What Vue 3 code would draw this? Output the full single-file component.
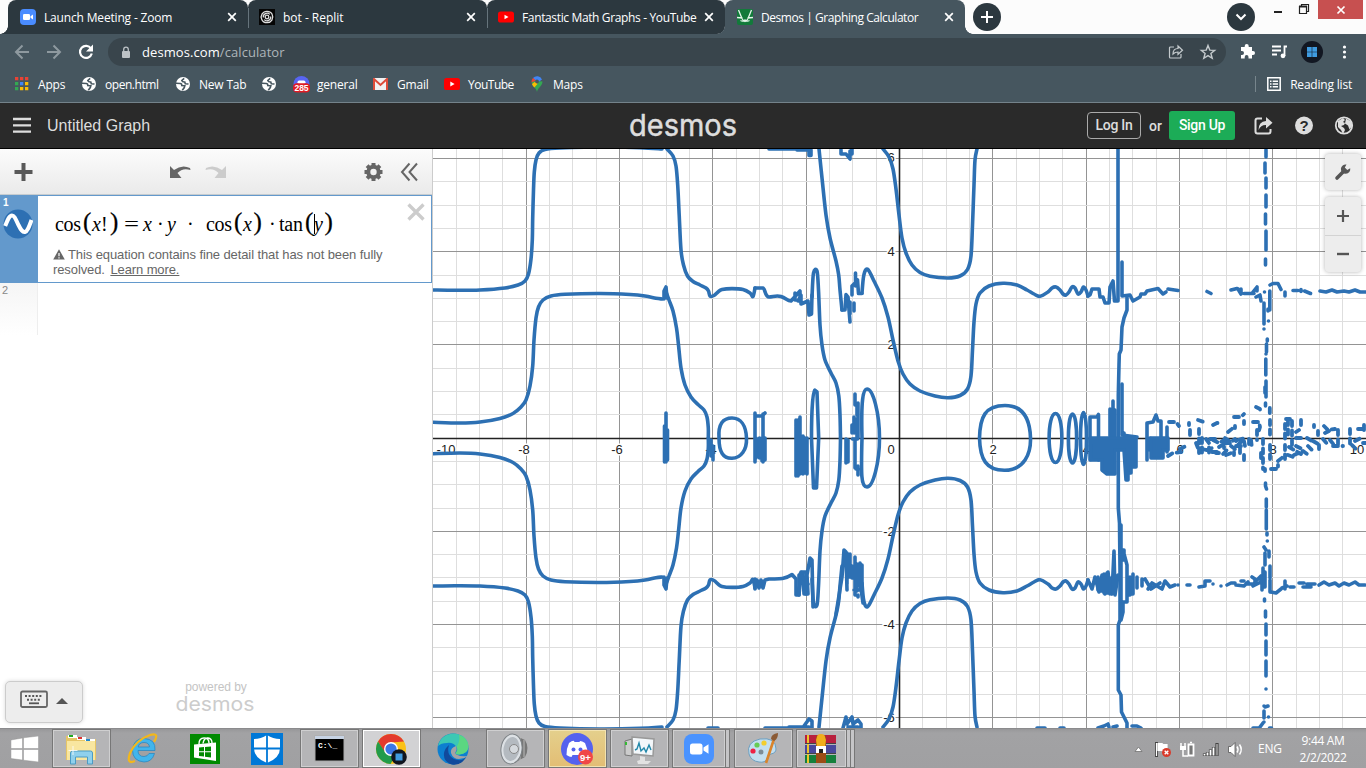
<script setup>
const tabs = [
  { title: 'Launch Meeting - Zoom', icon: 'zoom', w: 240, ls: -0.17 },
  { title: 'bot - Replit', icon: 'replit', w: 239, ls: -0.02 },
  { title: 'Fantastic Math Graphs - YouTube', icon: 'youtube', w: 238, ls: -0.36 },
  { title: 'Desmos | Graphing Calculator', icon: 'desmos', w: 240, active: true, ls: -0.44 }
]
const verticals = Array.from({ length: 41 }, (_, i) => ({ p: Math.round(432.2 + i * 23.34) + 0.5, major: i % 4 === 0 }))
const horizontals = Array.from({ length: 25 }, (_, i) => ({ p: Math.round(158 + i * 23.3) + 0.5, major: i % 4 === 0 }))
const labels = [
  ['-10', 446, 454], ['-8', 524, 454], ['-6', 617, 454], ['-4', 711, 454], ['0', 891, 454], ['2', 993, 454],
  ['4', 1086, 454], ['6', 1180, 454], ['8', 1273, 454], ['10', 1357, 454],
  ['6', 891, 162], ['4', 891, 256], ['2', 891, 349], ['-2', 889, 536], ['-4', 889, 629], ['-6', 889, 722]
]

function smooth(p) {
  let d = `M${p[0]} ${p[1]}`
  const n = p.length / 2
  const at = (i) => { const k = Math.max(0, Math.min(n - 1, i)); return [p[2 * k], p[2 * k + 1]] }
  for (let i = 0; i < n - 1; i++) {
    const [a, b, c, e] = [at(i - 1), at(i), at(i + 1), at(i + 2)]
    d += `C${b[0] + (c[0] - a[0]) / 6} ${b[1] + (c[1] - a[1]) / 6} ${c[0] - (e[0] - b[0]) / 6} ${c[1] - (e[1] - b[1]) / 6} ${c[0]} ${c[1]}`
  }
  return d
}

const mirrored = [
  [433, 290, 455, 290.3, 480, 290, 505, 288, 518, 285, 525, 281, 528.5, 274, 531, 259, 532.3, 240, 532.7, 218, 533.5, 190, 534.3, 172, 536, 160, 539, 153, 545, 149.5, 560, 148, 600, 147, 640, 147.6, 662, 149],
  [667, 149, 673, 156, 676, 166, 677.7, 185, 679.2, 215, 681, 250, 683.5, 265, 687.5, 276, 693, 281.5, 700, 285, 706, 288, 708.5, 291, 710, 296, 714, 295.5, 718, 292, 722, 289.5, 732, 288.6, 743, 289.5, 750, 293, 753, 296.5, 755, 288],
  [433, 422.3, 460, 423, 480, 422, 500, 418.5, 513, 413.5, 521, 407, 526, 400, 530, 386, 532.7, 366, 534, 340, 536, 318, 538.5, 307, 543, 300, 551, 296, 565, 294.3, 600, 293.5, 630, 294.5, 645, 296, 656, 298.3, 662, 299],
  [666, 292, 669, 300, 673, 311, 676.5, 328, 678.5, 345, 681, 368, 685, 385, 691, 397, 698, 404.5, 704, 410, 707, 417, 708.3, 428, 708.3, 438],
  [812, 297, 813.5, 273, 817, 271, 818.5, 290, 820, 325, 822, 345, 825, 360, 831, 373, 836, 383, 838.8, 396, 840, 415, 840.5, 438],
  [819, 149, 822, 178, 826, 215, 830, 238, 836, 261, 838.7, 275, 840, 290, 842, 310],
  [862, 293, 863.5, 277, 866, 269.5, 869, 271, 874, 281, 882, 298, 888, 317, 893, 340, 898, 361, 903, 374, 910, 384, 920, 391, 935, 396, 948, 397.7, 960, 395.5, 967.5, 389, 971, 376, 972.5, 350, 974, 322, 976, 304, 980, 293, 989, 286, 1003, 283.3, 1017, 285, 1027, 290, 1034, 294, 1040, 296.3, 1048, 292, 1052, 288, 1056, 287, 1060, 290, 1063, 294, 1066, 295, 1069, 292, 1072, 287, 1075, 288, 1078, 294, 1081, 292, 1083.5, 287, 1086, 290, 1088, 296],
  [883, 149, 889, 157, 893, 169, 896, 189, 899, 215, 902, 238, 906, 253, 912, 265, 920, 272.5, 930, 276.3, 948, 278, 960, 276, 967.5, 269.5, 971, 256, 972.5, 225, 974, 185, 975, 160, 977, 149]
].map(smooth)

const rings = [
  'M719 438C718 424 723 418 732 418S746 426 746.5 438 741 458 732 458.3 719 452 719 438Z',
  'M979.5 438C980 417 985 405.5 1005 405.5S1030 422 1030.5 438 1024 470 1005 470.3 980 459 979.5 438Z',
  'M862 438C861 400 863 389 867 389 873 389 879.5 413 879.5 438S873 487 867 487 861 475 862 438Z',
  'M811.5 438C811.5 410 813 390 814.5 390L817 392 818.7 438 816.5 488H813.5Z'
]

const jagged = [
  'M664 299V291L666 287 667 298', 'M666 413V462M664.5 426V462M667.5 430V460', 'M711 440V456M713 446v14M709 440v9',
  'M755 288h8C765 288 765 297 769 297S776 295 781 296.500 787 301 791 301L800 291V301H798L801 295V304L808 301 809 315 811.5 314 812 295M795 300V293',
  'M755 413V462M757 416h5L765 413M763 414V462M756 438V458M759.5 438V458M762 438V461M765 438V460M758 440V450',
  'M796 420V476M798 420V476M800 417V474M796 426l4-3M803 436V474M805 438V473M807 438V474',
  'M842 310L845 310 846 294.5 848 297 850 322M852 295V286L855 283 857.5 280 858.5 293.5H862M855.5 273V286M854 303v8M850 302v12',
  'M846 439V463M848 440V462', 'M852 425v8M852.5 439h5M854 417v16l3-14v20M855 394v11M858 403V438M855 440V468M858 466V475M856 469h3M857 407v8',
  'M755 579V589M757 580L759 588 761 580 763 588 765 580 769 579C778 579 784 580 792 574.5L796 579V595L799 595 801 572 803 574 804 594H808L807 575 810 558 812 560 813 607',
  'M806 574V594M802 572h5M799 575V595M800 574L808 584',
  'M836 614L842 577 844 550 846 552 847 590M847 553V584M850 554V577M852 566V578M855 557V595M857 564V591M854 590h5M858 595v2M860 563V582L863 603M862 565V590M853 575h9',
  'M769 149h30M797 150h13M809 150V155.500H811V150M841 150V154L846 154 850 159V151M852 149V154',
  'M708 728h10M765 728h25M789 727h20M804 726L809 719 812 721V728M843 728L846 717 847 724 852 717 853 724 858 720 861 724V728M848 727h10',
  'M1088 296L1090 295 1092 289 1099 289 1100 297 1103 297 1105 303H1109L1110 287 1113 281 1114.5 301 1118 301V149',
  'M1122 262V296L1130 295 1133 301 1140 297 1141 294H1145L1147 291 1158 288.5 1163 294 1166 292',
  'M1127 296V310L1124 318 1122 327 1121 350 1119.3 354 1119 365 1118.3 395V508L1119.5 523 1120 570V620L1118.3 625V690L1121 695 1121.5 712 1127 723V728',
  'M1055.5 413.5C1047 413.5 1047 462.5 1055.5 462.5S1064 413.5 1055.5 413.5M1072.5 414C1067 414 1067 463 1072.5 463S1078 414 1072.5 414M1083.5 412.5C1079.5 412.5 1079.5 464.5 1083.5 464.5S1087.5 412.5 1083.5 412.5',
  'M1090 460V417H1097L1098.5 414.5V460M1110 436V409M1113 436V401M1115 436V410M1122 384V435L1137 437M1124 433V450',
  'M1147 460V423L1153 422 1156 415 1158 421H1161V457M1167 427V452M1150 438V450',
  'M1088 580L1092 589 1095 577 1099 592 1102 575 1105 594 1108 572 1110 590 1112 594 1114 551 1115 595 1118 575',
  'M1098 577V590M1101 579V591M1104 574V593M1107 573V593M1110 578V594M1121 525V610M1123 550L1127 565V602H1123V612L1121 620M1124 560V550M1127 589V596M1130 577V595M1133 574V594M1137 577V588M1142 579V586M1145 579L1151 589 1160 583M1148 589L1152 583 1162 589 1165 581 1170 587 1175 585'
]
const fillBlocks = [
  'M1090 438H1136V467H1131V473H1128V480H1126L1124 450H1115V474H1107L1102 470V460H1091Z',
  'M1151 438H1168V450H1163V458H1151Z'
]
const sparks = [
  'M1168 289L1178 290.5M1207 291.5l4 2M1231 290l6-1.5M1238 289l3 5v-5M1244 293.5h10M1253 292l4-5v4M1256 297l4-2 1 6M1264.5 292v0M1269.8 291v19M1264 303v21M1268 309v2M1264 329v0M1268.5 321v0M1270 285l3-1.5h5l3 6M1285 292v4M1293 290.5h5M1301 289.5v2M1304.5 291l6 2.5M1320 291l6 1 6-2 5 2 7-1 5 1 6-2 5 2h6',
  'M1266 150v7M1265 163v10M1266 178v10M1266 195v12M1265.5 214v10M1266 231v19M1265.5 259v6M1267.3 339v2M1266.5 344v8M1266 354v0M1265.8 359v16M1266 381v16M1265.5 403v3M1265 387v6M1265.5 483v3l1 3M1266.3 499v8M1266.3 510v19M1267 533v2M1267.3 541v0M1264 547l2 3M1265 553v12M1263 568v10M1262 581v9M1265 572v15M1269 551v6M1270 566v12M1270 580v12M1264.5 599v2M1265.5 611v6M1266 624v11M1266 641v14M1266 661v15M1266 689v0M1264 706v0M1265 707l3-1M1264 711v7M1268.5 717v0M1260 727l3-4M1253 728h5M1269.5 728h2M1264 722v0',
  'M1037 728h8M1060 728h4M1098 728l6-2 4-2 1 3M1113 727l4-1M1132 726h5l4 2',
  'M1178 585h0M1187 585h3M1199 587l6-1v-5h5M1213 584h0M1221 586h0M1227 585l4-2h4M1236 585l8 1 4-4M1241 581h3M1247 584h6M1252 577l3 2v6M1257 580l4-4v7M1253 586l8-4M1271 592l5 1 5-4M1282 588l5-2M1285 581v8M1290 587h4M1299 583h5M1303 587h8M1307 584h8M1319 585l5-3 5 3 6-2 4 3 5-3 5 2 6-3 4 3h6'
]
const dotted = [
  'M1169 422h7l3 4M1189 423v2M1190 430v8M1183 438v0M1198 420l6 2M1213 425l4-2h3M1234 417h7l3-3M1199 429v24M1202 438v15M1206 439l3 4v10M1213 440l6 3 5-3v8M1225 438l6 4 4-3 3 6 6-6M1228 432l5-4M1235 426v2M1244 421v3M1249 439v6M1240 448v5M1244 455v6M1234 452v3M1251 440l1 8M1223 454l4-4M1216 453h3M1196 443l3 8M1168 456l5-3 8-1M1180 449l8-4M1256 407l4 2v3M1253 422h6l1 5-2 7M1257 430v10M1263 439v30M1269.8 408v7M1270 420v15M1270 445v14M1261 453v8M1265 469v2',
  'M1207 450l8-3M1219 447l10-6M1226 455l8-3M1231 446l5 4M1244 441l1 5M1210 439h9M1212 452h5M1238 440l7-2M1236 446h8M1202 449l9 2M1225 443h5',
  'M1271 469h7v-4M1278 461l5-4M1283 464v0M1285 424v17M1286 419h4M1288 420v18M1292 421v25M1285 445v14M1288 455l5 2M1294 455l9-4 4 3M1296 446l6 3M1301 420v7M1299 430l-3 2M1314 425v2M1318 431v4M1313 441l7 4M1324 426l4 4 7-1M1325 433l4-2M1323 439l5 6M1330 440l4 5M1338 430v19M1333 446h10M1342 447v0M1350 429v18M1355 441l6-3M1358 429h4M1364 425v8M1363 443h3M1308 446l4 4M1319 445v4M1296 438h6M1307 438l5 3M1289 447l12 7M1352 445l5 5'
]

const tasks = ['explorer', 'ie', 'store', 'defender', 'cmd', 'chrome', 'edge', 'speaker', 'discord', 'monitor', 'zoom', 'paint', 'rar']
const open = ['explorer', 'cmd', 'chrome', 'speaker', 'discord', 'monitor', 'zoom', 'paint', 'rar']
</script>

<template>
  <div class="screen">
    <div class="tabstrip">
      <div class="tabs">
        <div v-for="(t, i) in tabs" :key="t.title" class="tab" :class="{ active: t.active, last: i === 2 }" :style="{ width: t.w + 'px' }">
          <svg class="fav" viewBox="0 0 16 16">
            <g v-if="t.icon === 'zoom'"><rect width="16" height="16" rx="4" fill="#4a8cff" /><rect x="3" y="5" width="7" height="6" rx="1.3" fill="#fff" /><path d="M10.5 7.3L13 5.4v5.2l-2.5-1.9z" fill="#fff" /></g>
            <g v-else-if="t.icon === 'replit'"><rect width="16" height="16" fill="#050505" /><g fill="none" stroke="#ddd" stroke-width="1.3"><circle cx="8" cy="8" r="1.8" /><path d="M2.800 10.500A5.700 5.700 0 0 1 8 2.300q4 0 5.200 3.200M13.200 5.500A5.700 5.700 0 0 1 8 13.700q-4 0-5.200-3.200M4.300 8.500A3.800 3.800 0 0 1 10.800 5.400M11.700 7.500A3.800 3.800 0 0 1 5.200 10.600" /></g></g>
            <g v-else-if="t.icon === 'youtube'"><rect y="2.500" width="16" height="11" rx="2.600" fill="#f00" /><path d="M6.500 5.700v4.600L10.500 8z" fill="#fff" /></g>
            <g v-else><rect width="16" height="16" rx="2" fill="#127a3a" /><path d="M1.500 1L5 9.500Q6.500 12.500 8 12.500T11 9.500L14.500 1M0 8.500l5.500.5M16 8.500l-5.500.5M3.500 11.500q2.500 1.500 4.500-.5 2 2 4.500.5" fill="none" stroke="#e4f5ea" stroke-width="1.300" /></g>
          </svg>
          <span class="tt" :style="{ letterSpacing: t.ls + 'px' }">{{ t.title }}</span>
          <svg class="x" viewBox="0 0 10 10"><path d="M1.200 1.200l7.600 7.600M8.800 1.200L1.200 8.800" stroke="#fff" stroke-width="1.700" /></svg>
        </div>
      </div>
      <svg class="round plus" viewBox="0 0 28 28"><circle cx="14" cy="14" r="14" fill="#2c383f" /><path d="M14 8v12M8 14h12" stroke="#fff" stroke-width="2" /></svg>
      <svg class="round down" viewBox="0 0 28 28"><circle cx="14" cy="14" r="14" fill="#2c383f" /><path d="M9.500 11.500L14 16l4.500-4.500" fill="none" stroke="#fff" stroke-width="2" /></svg>
      <svg class="caps" viewBox="0 0 48 19"><path d="M5 12h8" stroke="#222" stroke-width="2" /><path d="M30.500 6.500h7v7h-7zM32.500 6V4.500h7v7H38" fill="none" stroke="#222" stroke-width="1.200" /><path d="M30 6.500h8" stroke="#222" stroke-width="2" /></svg>
      <div class="closewin"><svg viewBox="0 0 10 10"><path d="M1.500 1.500l7 7M8.500 1.500l-7 7" stroke="#fff" stroke-width="1.700" /></svg></div>
    </div>

    <div class="navbar">
      <svg class="navicons" viewBox="0 0 108 36"><g fill="none" stroke="#8e999f" stroke-width="2"><path d="M29 18H16M22.500 11.500L16 18l6.500 6.500M47 18h13M53.500 11.500L60 18l-6.500 6.500" /></g><path d="M91 14.500A6 6 0 1 0 91.800 19.500" fill="none" stroke="#fff" stroke-width="2.200" /><path d="M93 10.500v7h-7z" fill="#fff" /></svg>
      <div class="omni">
        <svg class="lock" viewBox="0 0 10 13"><rect x="1" y="5" width="8" height="7" rx="1" fill="#bcc2c6" /><path d="M2.700 6V3.500a2.300 2.300 0 0 1 4.600 0V6" fill="none" stroke="#bcc2c6" stroke-width="1.300" /></svg>
        <span class="url">desmos.com<i>/calculator</i></span>
        <svg class="omr" viewBox="0 0 50 20"><g fill="none" stroke="#c4cacd" stroke-width="1.200"><path d="M6 5H2.500q-1 0-1 1v9q0 1 1 1h9.500q1 0 1-1v-3" /><path d="M5 12q0-5.500 5-5.500V4l4.500 4.300L10 12.300V10q-3 0-5 2z" /><path d="M40 3.500l1.800 4.600 4.900.3-3.800 3.100 1.300 4.800-4.200-2.700-4.200 2.700 1.300-4.800-3.800-3.100 4.900-.3z" stroke-width="1.400" /></g></svg>
      </div>
      <svg class="navright" viewBox="0 0 140 36"><path d="M15 13h3.700v-1a2 2 0 0 1 4 0v1H26v4h1a2 2 0 0 1 0 4h-1v3.500h-3.500V23a1.900 1.900 0 0 0-3.800 0v1.500H15V21h1a2 2 0 0 0 0-4h-1z" fill="#fff" /><path d="M46 12.500h9M46 16.500h9M46 20.500h5M58.500 22V12.500H61" fill="none" stroke="#fff" stroke-width="1.800" /><circle cx="57" cy="21.800" r="2.400" fill="#fff" /><circle cx="86" cy="18" r="11" fill="#121722" /><path d="M81 13h4.700v4.700H81zM86.300 13H91v4.700h-4.700zM81 18.300h4.700V23H81zM86.300 18.300H91V23h-4.700z" fill="#3f9be0" /><g fill="#fff"><circle cx="118.500" cy="13" r="1.600" /><circle cx="118.500" cy="18" r="1.600" /><circle cx="118.500" cy="23" r="1.600" /></g></svg>
    </div>

    <div class="bookmarks">
      <svg class="b16" viewBox="0 0 14 14"><path d="M0 0h3.300v3.300H0zM5 0h3.300v3.300H5zM10 0h3.300v3.300H10z" fill="#ea4335" /><path d="M0 5h3.300v3.300H0zM0 10h3.300v3.300H0z" fill="#34a853" /><path d="M5 5h3.300v3.300H5z" fill="#4285f4" /><path d="M5 10h3.300v3.300H5zM10 5h3.300v3.300H10zM10 10h3.300v3.300H10z" fill="#fbbc05" /></svg>
      <span class="bm apps">Apps</span>
      <template v-for="(n, i) in ['open.html', 'New Tab', '']" :key="i">
        <svg class="globe" viewBox="0 0 14 14"><circle cx="7" cy="7" r="7" fill="#fff" /><path d="M0 6.300l4.300.2q1.800.3 1.500 2l3 .3-.5 1.800-2 2.600M8.200 1.300L5.800 3.500q.5 1.700 3 1.500l.5 1.700 3.200.3" fill="none" stroke="#46565f" stroke-width="1.600" /></svg>
        <span v-if="n" class="bm" :class="'g' + i">{{ n }}</span>
      </template>
      <svg class="disc" viewBox="0 0 17 17"><circle cx="8.500" cy="8" r="8" fill="#5865f2" /><rect x="4.500" y="4.500" width="8" height="3.500" rx="1.700" fill="#fff" /><rect y="7.300" width="17" height="9.200" rx="4" fill="#e01b24" /><text x="8.500" y="15" text-anchor="middle" font-family="Liberation Sans" font-weight="700" font-size="8.500" fill="#fff">285</text></svg>
      <span class="bm gen">general</span>
      <svg class="gm" viewBox="0 0 15 12"><rect width="15" height="12" rx="1" fill="#f1f1f1" /><path d="M1 12V1l6.500 6L14 1v11" fill="none" stroke="#dd4b39" stroke-width="2" /></svg>
      <span class="bm gml">Gmail</span>
      <svg class="yt" viewBox="0 0 16 12"><rect width="16" height="12" rx="2.600" fill="#f00" /><path d="M6.300 3.500v5l4.300-2.500z" fill="#fff" /></svg>
      <span class="bm ytl">YouTube</span>
      <svg class="mp" viewBox="0 0 12 16"><path d="M6 16C5.500 12 .5 10 .5 5.500L6 5l5.500.5C11.500 10 6.500 12 6 16z" fill="#34a853" /><path d="M2 2A5.500 5.500 0 0 1 11 3.500L6 7z" fill="#4285f4" /><path d="M.6 6.500A5 5 0 0 1 2 2l3 2.500z" fill="#ea4335" /><path d="M1 8l4-3 1.500 3L3.300 11.500Q1.500 9.500 1 8z" fill="#fbbc04" /><circle cx="6" cy="5.500" r="1.900" fill="#46565f" /></svg>
      <span class="bm">Maps</span>
      <div class="reading"><svg viewBox="0 0 14 14"><path d="M.8.8h12.400v12.400H.8zM3 4.200h1.500M3 7h1.500M3 9.800h1.500M5.700 4.200H11M5.700 7H11M5.700 9.800H11" fill="none" stroke="#fff" stroke-width="1.500" /></svg><span class="bm">Reading list</span></div>
    </div>

    <header class="head">
      <svg class="burger" viewBox="0 0 20 18"><path d="M1 2h18M1 8.300h18M1 14.700h18" stroke="#ddd" stroke-width="2.300" /></svg>
      <span class="gtitle">Untitled Graph</span>
      <svg class="logo" viewBox="0 0 116 44"><text x="3" y="32" textLength="108" lengthAdjust="spacingAndGlyphs" font-family="Inter" font-size="30" fill="#ddd" stroke="#ddd" stroke-width=".5" stroke-linejoin="round">desmos</text></svg>
      <div class="acct">
        <span class="login">Log In</span><span class="or">or</span><span class="signup">Sign Up</span>
        <svg class="hicons" viewBox="0 0 104 22"><path d="M9 3.500H4.500q-2 0-2 2v11q0 2 2 2h11q2 0 2-2V14" fill="none" stroke="#ddd" stroke-width="2" /><path d="M5.500 15Q5.500 6.500 13 6V2l6.500 5.800L13 13.500V10q-5-.3-7.500 5z" fill="#ddd" /><circle cx="51" cy="10.500" r="9" fill="#ddd" /><text x="51" y="15.800" text-anchor="middle" font-family="Liberation Sans" font-weight="700" font-size="15" fill="#2a2a2a">?</text><circle cx="91" cy="10.500" r="8.200" fill="none" stroke="#ddd" stroke-width="1.800" /><path d="M85 6l5-3 2 2-2 2 2 1-1 2-3 1 3 2 1 2-2 4-2-4-3-3zM93 3.500l5 3 1.500 4-3 4-1.500-4-3-2z" fill="#ddd" /></svg>
      </div>
    </header>

    <main class="body">
      <aside class="panel">
        <div class="ptool">
          <svg viewBox="0 0 433 46"><path d="M23.500 14v18M14.500 23h18" stroke="#595959" stroke-width="4" /><path d="M170 29V17l4 4q8-6 16-2l.5 2q-8-2.500-13 3l4 5z" fill="#666" /><path d="M226 29V17l-4 4q-8-6-16-2l-.5 2q8-2.500 13 3l-4 5z" fill="#ccc" /><g transform="translate(373.500 23)"><circle r="5.200" fill="none" stroke="#666" stroke-width="4" /><path d="M0-9v3M0 6v3M-9 0h3M6 0h3M-6.400-6.400l2.200 2.200M4.200 4.200l2.200 2.200M6.400-6.400L4.200-4.200M-4.200 4.200l-2.200 2.200" stroke="#666" stroke-width="4" /></g><path d="M409.500 14.500l-7.500 8.500 7.500 8.500M417 14.500L409.500 23l7.500 8.500" fill="none" stroke="#666" stroke-width="2" /></svg>
        </div>
        <div class="expr">
          <div class="etab"><b>1</b><svg viewBox="0 0 30 30"><circle cx="15" cy="15" r="14.500" fill="#2d70b3" /><path d="M2.200 17C5 10 6.500 6.500 9 6.500S13 11 15.500 16 19.500 23.500 22 23 26 18 28.500 11" fill="none" stroke="#fff" stroke-width="4" /></svg></div>
          <div class="ebody">
            <svg class="formula" viewBox="0 0 340 40" font-family="Liberation Serif" font-size="20">
              <text x="17" y="34.500" textLength="26">cos</text><text x="54" y="34.500" font-style="italic">x</text><text x="63" y="34.500">!</text>
              <text x="86" y="34.500" textLength="15" lengthAdjust="spacingAndGlyphs">=</text><text x="105" y="34.500" font-style="italic">x</text><text x="119" y="34.500">·</text><text x="129" y="34.500" font-style="italic">y</text><text x="149" y="34.500">·</text>
              <text x="168" y="34.500" textLength="26">cos</text><text x="205" y="34.500" font-style="italic">x</text><text x="231" y="34.500">·</text><text x="241" y="34.500" textLength="24">tan</text><text x="276" y="34.500" font-style="italic">y</text>
              <g font-size="25" stroke="#000" stroke-width=".25"><text x="45" y="33.500">(</text><text x="72" y="33.500">)</text><text x="196" y="33.500">(</text><text x="215.500" y="33.500">)</text><text x="267" y="33.500">(</text><text x="286.500" y="33.500">)</text></g>
              <path d="M276.500 18v20" stroke="#000" />
            </svg>
            <svg class="del" viewBox="0 0 18 18"><path d="M1.500 1.500l15 15M16.500 1.500l-15 15" stroke="#ccc" stroke-width="3.300" /></svg>
            <p class="warn"><svg viewBox="0 0 12 11"><path d="M6 .3l5.800 10.200H.2z" fill="#666" /><path d="M6 4v3.200M6 8.200v1.200" stroke="#fff" stroke-width="1.200" /></svg>This equation contains fine detail that has not been fully<br>resolved.&nbsp;<u>Learn more.</u></p>
          </div>
        </div>
        <div class="row2">2</div>
        <div class="pfoot">
          <div class="kbd"><svg viewBox="0 0 50 20"><rect x="1" y="1.500" width="26" height="15.500" rx="1.500" fill="none" stroke="#666" stroke-width="1.800" /><path d="M5 6h18M7 9.800h14" stroke="#555" stroke-width="2" stroke-dasharray="2 1.600" /><path d="M9 13.300h10" stroke="#555" stroke-width="1.800" /><path d="M36 14h12l-6-6z" fill="#555" /></svg></div>
          <div class="pow"><span>powered by</span><svg viewBox="0 0 84 26"><text x="1.500" y="18" textLength="79" lengthAdjust="spacingAndGlyphs" font-family="Inter" font-size="19.500" fill="#ccc">desmos</text></svg></div>
        </div>
      </aside>

      <section class="graph">
        <svg class="plot" viewBox="433 149 933 579">
          <path v-for="v in verticals" :key="'v' + v.p" :d="`M${v.p} 149V728`" :stroke="v.major ? '#949494' : '#dedede'" />
          <path v-for="h in horizontals" :key="'h' + h.p" :d="`M433 ${h.p}H1366`" :stroke="h.major ? '#949494' : '#dedede'" />
          <path d="M433 438.500H1366M899.500 149V728" stroke="#222" stroke-width="1.600" />
          <g class="lab"><text v-for="l in labels" :key="l.join()" :x="l[1]" :y="l[2]">{{ l[0] }}</text></g>
          <g class="curve">
            <g><path v-for="(d, i) in mirrored" :key="i" :d="d" /></g>
            <g transform="matrix(1 0 0 -1 0 876)"><path v-for="(d, i) in mirrored" :key="i" :d="d" /></g>
            <path v-for="(d, i) in rings" :key="'r' + i" :d="d" />
            <path v-for="(d, i) in jagged" :key="'j' + i" :d="d" />
            <path d="M664 577V585L666 589 667 578" />
            <path v-for="(d, i) in fillBlocks" :key="'f' + i" :d="d" fill="#2d70b3" />
            <path v-for="(d, i) in sparks" :key="'s' + i" :d="d" />
            <path v-for="(d, i) in dotted" :key="'d' + i" :d="d" class="dots" />
          </g>
        </svg>
        <div class="tools">
          <div class="tool"><svg viewBox="0 0 18 18"><path d="M3 15L10 8" stroke="#555" stroke-width="3.600" stroke-linecap="round" /><path d="M16.200 5.200A4.700 4.700 0 1 1 12.500 1.500L10.800 4.500l2.500 2.500z" fill="#555" /></svg></div>
          <div class="zoomer"><div><svg viewBox="0 0 12 12"><path d="M6 0v12M0 6h12" stroke="#555" stroke-width="2.200" /></svg></div><div><svg viewBox="0 0 12 12"><path d="M0 6h12" stroke="#555" stroke-width="2.400" /></svg></div></div>
        </div>
      </section>
    </main>

    <footer class="taskbar">
      <svg class="win" viewBox="0 0 28 26"><path d="M0 4l11.500-2v10.500H0zM12.500 1.800L27.500 0v12.500h-15zM0 13.500h11.500V24L0 22.500zM12.500 13.500h15V26l-15-1.800z" fill="#fff" stroke="#888" stroke-width=".4" /></svg>
      <div class="tasks">
        <div v-for="t in tasks" :key="t" class="task" :class="[t, { open: open.includes(t) }]">
          <svg viewBox="0 0 32 32">
            <g v-if="t === 'explorer'"><path d="M1 3h10l2 3h18v21H1z" fill="#e6c566" /><path d="M3 2h9v3H3z" fill="#fff" /><path d="M4 2h4v2H4z" fill="#2a2" /><path d="M12 4h9v3h-9z" fill="#fff" /><path d="M13 4h4v2h-4z" fill="#d33" /><path d="M20 6h10v3H20z" fill="#fff" /><path d="M21 6h4v2h-4z" fill="#28c" /><path d="M2 8h28v19H2z" fill="#f8e6a0" /><path d="M5.500 31V20q0-2 2-2h18q2 0 2 2v11h-5v-7h-12v7z" fill="#8fd0ec" stroke="#4b9bc4" /><path d="M8 13v9M3.500 17.500h9" stroke="#fff" stroke-width=".8" /></g>
            <g v-else-if="t === 'ie'"><path d="M28 17.500H11q0 6 6 6 3.500 0 5-3h5.500Q25 29 17 29 5.500 28 5.500 17 6.500 5.500 17 5.500 29 6 28 17.500zM11.200 14H22.500q-.5-4.500-5.500-4.500T11.200 14z" fill="#42b5ec" stroke="#2384c0" stroke-width=".7" /><path d="M27 9Q33-1 23 2 9 7 3 20-1 32 8 28" fill="none" stroke="#f2b71c" stroke-width="2.300" /></g>
            <g v-else-if="t === 'store'"><rect x="1" y="1" width="30" height="30" fill="#008a00" /><path d="M5 11.500l22-2V28L5 24.500z" fill="#fff" /><path d="M10 11q0-6 5-6t5 5M14 10.500q1-6 5-5.500 4 .5 4 5" fill="none" stroke="#fff" stroke-width="1.400" /><path d="M10 14.500l5-.4v4.200h-5zM16 14l6-.5v4.800h-6zM10 19.300h5v4.200l-5-.5zM16 19.300h6v5.200l-6-.7z" fill="#008a00" /></g>
            <g v-else-if="t === 'defender'"><rect width="32" height="32" fill="#0078d7" /><path d="M16 2Q10 6 3 6v9q0 10 13 15 13-5 13-15V6q-7 0-13-4z" fill="#fff" /><path d="M16 2v28M3 15.500h26" stroke="#0078d7" stroke-width="1.800" /></g>
            <g v-else-if="t === 'cmd'"><rect x="2" y="3" width="29" height="25" fill="#000" stroke="#aaa" /><path d="M2 3h29v3H2z" fill="#c7d3e4" /><text x="5" y="14.500" font-family="Liberation Mono" font-size="8" font-weight="700" fill="#fff">C:\_</text></g>
            <g v-else-if="t === 'chrome'"><circle cx="16" cy="16" r="15" fill="#fbc116" /><path d="M3 8.500A15 15 0 0 1 29 8.500L16 9.500 9.500 19z" fill="#e33b2e" /><path d="M3 8.500A15 15 0 0 0 15.500 31L22 20 10 19z" fill="#229b4b" /><circle cx="16" cy="16" r="7" fill="#fff" /><circle cx="16" cy="16" r="5.600" fill="#3b78e7" /><circle cx="24" cy="24" r="7.800" fill="#10151f" /><path d="M20.500 20.500h7v7h-7z" fill="#3f9be0" /></g>
            <g v-else-if="t === 'edge'"><circle cx="16" cy="16" r="15.500" fill="#0d7fd0" /><path d="M1 13Q4 1 17 .5 31 2 31.500 14q-1 7-9 7.500-4 0-4-1.500 3-3 1-6Q16 9 10 10q-6 0-9 3z" fill="#3cc8b4" /><path d="M22 1.800Q31 5 31.500 14q-1 7-9 7.500-4 0-4-1.500 3-3 1-6 4-6 2.500-12.200z" fill="#66dc70" opacity=".75" /><path d="M12 12Q9 22 17 26q8 3 12-2-5 9-14 7.500Q6 29 7 20q1-5 5-8z" fill="#114a9c" /><path d="M19 13q-6 2-5 7 2 6 8 6 5 0 9-3-7 1-10.500-1-3-1-2-3 2-2 .5-6z" fill="#a3a3a5" /></g>
            <g v-else-if="t === 'speaker'"><path d="M15 2l11 5q5 8 0 17l-11 6z" fill="#777" /><path d="M21 4v23M25 7v17" stroke="#bbb" /><ellipse cx="12.500" cy="16" rx="10.500" ry="15" transform="rotate(8 12.500 16)" fill="#dde1e5" stroke="#7d8286" /><ellipse cx="12.500" cy="16" rx="8" ry="12" transform="rotate(8 12.500 16)" fill="#b4bac0" /><circle cx="15" cy="16" r="4.500" fill="#d5d9dd" stroke="#888" /></g>
            <g v-else-if="t === 'discord'"><circle cx="16" cy="16" r="16" fill="#5562ee" /><path d="M8 10q4-3 5-2l.5 1h5l.5-1q2 0 5 2 3 6 2.500 12-3 2-5 2l-1-2h-9l-1 2q-2 0-5-2Q5.500 15 8 10z" fill="#fff" /><circle cx="12.500" cy="16.500" r="2" fill="#5562ee" /><circle cx="19.500" cy="16.500" r="2" fill="#5562ee" /><circle cx="24.500" cy="24" r="7.500" fill="#f04747" /><text x="24.500" y="27.500" text-anchor="middle" font-family="Liberation Sans" font-size="9.500" font-weight="700" fill="#fff">9+</text></g>
            <g v-else-if="t === 'monitor'"><path d="M2 8l7-2v17l-7-1z" fill="#ccc" stroke="#777" /><path d="M3 9v3" stroke="#3b3" stroke-width="2" /><path d="M9 4l22 2-1 17-20-2z" fill="#f3f7fa" stroke="#999" stroke-width="1.500" /><path d="M12 17l2-1 2-6 2 8 3-3 2 4 3-7 2 5" fill="none" stroke="#28a" stroke-width="1.400" /><path d="M17 23l5 1v4h6l-3 3H15l-1-3 3-1z" fill="#e2e2e2" /></g>
            <g v-else-if="t === 'zoom'"><rect x="1" y="1" width="30" height="30" rx="8" fill="#4a93ff" /><rect x="7" y="10.500" width="12.500" height="11" rx="2.500" fill="#fff" /><path d="M20.500 14.500l5-3.300v9.600l-5-3.300z" fill="#fff" /></g>
            <g v-else-if="t === 'paint'"><path d="M2 21Q-1 9 13 6 29 4 29 16q0 4-5 5-4 1-4 5-2 4-8 3Q4 28 2 21z" fill="#c3dff0" stroke="#6c9fc0" /><circle cx="10" cy="12" r="2.600" fill="#6c5" /><circle cx="17" cy="10" r="2.600" fill="#f3ce2e" /><circle cx="6" cy="18" r="2.600" fill="#e24" /><circle cx="14" cy="19" r="2.500" fill="#7d8c96" /><path d="M27 6L19 30" stroke="#d9842c" stroke-width="2.600" /><path d="M24 6q0-5 7-6 0 6-4 8z" fill="#8b5a35" /></g>
            <g v-else><path d="M0 2h31v9H0z" fill="#b8203e" /><path d="M0 12h31v9H0z" fill="#4a489c" /><path d="M0 22h31v8H0z" fill="#15803c" /><path d="M3 2v28" stroke="#edc62a" stroke-width="2" /><path d="M0 10.500h31M0 20.500h31" stroke="#444" stroke-width="1" /><path d="M11 3h10v27H11z" fill="#9c4c16" /><path d="M12 4q0-3 4-3t4 3l1 3-1 7h-8l-1-7z" fill="#f0ad1c" /><path d="M11 13h10v7h-3v-4h-4v4h-3z" fill="#fff" /><path d="M14 16h4v4h-4z" fill="#222" /></g>
          </svg>
        </div>
      </div>
      <svg class="tray" viewBox="0 0 112 20"><path d="M1 12.500L4.500 8 8 12.500z" fill="#fff" stroke="#666" stroke-width=".7" /><path d="M22.500 3v15" stroke="#444" stroke-width="3" /><path d="M22.500 4v13M24 4.500h4l1 1h4v7h-4l-1-1h-4z" stroke="#fff" stroke-width="1.200" fill="#fff" /><circle cx="32.500" cy="13.500" r="4.500" fill="#d93a2b" /><path d="M30.700 11.700l3.600 3.600M34.300 11.700l-3.600 3.600" stroke="#fff" stroke-width="1.400" /><path d="M54.500 5.500h5v11h-5z" fill="#777" stroke="#fff" stroke-width="1.800" /><path d="M56 3.500h2M47 4v3M51 4v3M49 11v6h5" stroke="#fff" stroke-width="1.500" fill="none" /><path d="M46 7h6v4h-6z" fill="#fff" /><path d="M70.500 17v-2.500M73.500 17v-4M76.500 17v-6.500M79.500 17V8M83 17V4" stroke="#444" stroke-width="3.200" /><path d="M70.500 16.500V15M73.500 16.500v-3M76.500 16.500V11M79.500 16.500v-8" stroke="#fff" stroke-width="1.800" /><path d="M83 16.500V5" stroke="#999" stroke-width="1.800" /><path d="M94.500 7.500h2.500l4-4v14l-4-4h-2.500z" fill="#fff" stroke="#555" stroke-width=".8" /><path d="M103 7.500q2 3 0 6M105.500 5.500q3.500 5 0 10" fill="none" stroke="#fff" stroke-width="1.500" /></svg>
      <span class="eng">ENG</span>
      <div class="clock">9:44 AM<br>2/2/2022</div>
    </footer>
  </div>
</template>

<style>
body { margin: 0; overflow: hidden; }
</style>
<style scoped>
.screen { width: 1366px; height: 768px; overflow: hidden; display: flex; flex-direction: column; background: #fff; font-family: "Open Sans", "Noto Sans", sans-serif; font-size: 12px; }
svg { display: block; flex: none; }
.tabstrip { height: 34px; flex: none; display: flex; background: radial-gradient(circle at 8px 0, transparent 7.500px, #46565f 8px) 965px 26px / 8px 8px no-repeat, #fcfcfc; }
.tabs { display: flex; width: 965px; flex: none; padding-left: 8px; box-sizing: border-box; background: radial-gradient(circle at 0 0, #fcfcfc 7.500px, #2c383f 8px) 0 26px / 9px 8px no-repeat; }
.tab { height: 34px; box-sizing: border-box; padding: 0 11px 0 11px; flex: none; display: flex; align-items: center; background: #2c383f; color: #fff; border-radius: 8px 8px 0 0; position: relative; }
.tab:first-child { padding-left: 12px; }
.tab:nth-child(2)::before, .tab:nth-child(3)::before { content: ""; width: 1px; height: 20px; background: #66747c; position: absolute; left: 0; top: 8px; }
.tab.last { border-bottom-right-radius: 8px; }
.tab.active { background: #46565f; padding-left: 12px; }
.tab.active::before { content: ""; position: absolute; left: -8px; bottom: 0; width: 8px; height: 8px; background: radial-gradient(circle at 0 0, transparent 7.500px, #46565f 8px); }
.fav { width: 16px; height: 16px; margin-right: 8px; }
.tt { flex: 1; white-space: nowrap; min-width: 0; }
.x { width: 10px; height: 10px; }
.round { width: 28px; height: 28px; margin-top: 3px; }
.plus { margin-left: 8px; }
.down { margin-left: 226px; }
.caps { width: 48px; height: 19px; margin-left: 14px; }
.closewin { width: 45px; height: 19px; background: #c75050; display: flex; align-items: center; justify-content: center; margin-left: auto; margin-right: 3px; flex: none; }
.closewin svg { width: 10px; height: 10px; }
.navbar { height: 36px; flex: none; background: #46565f; display: flex; }
.navicons { width: 108px; height: 36px; }
.omni { width: 1118px; height: 28px; margin-top: 4px; border-radius: 14px; background: #39454c; display: flex; align-items: center; box-sizing: border-box; padding: 0 8px 0 13px; }
.lock { width: 10px; height: 13px; }
.url { margin-left: 11px; flex: 1; color: #fff; font-size: 13px; letter-spacing: .08px; }
.url i { font-style: normal; color: #aeb6ba; }
.omr { width: 50px; height: 20px; }
.navright { width: 140px; height: 36px; }
.bookmarks { height: 28px; flex: none; background: #46565f; border-bottom: 1px solid #74828a; display: flex; align-items: center; padding: 0 14px 4px 15px; color: #fff; width: 1337px; }
.bm { white-space: nowrap; letter-spacing: -.2px; }
.b16 { width: 14px; height: 14px; margin-right: 9px; }
.apps { width: 44px; }
.globe { width: 14px; height: 14px; margin-right: 9px; }
.g0 { width: 71px; letter-spacing: -.45px; }
.g1 { width: 63px; }
.disc { width: 17px; height: 17px; margin: 0 7px 0 8px; }
.gen { width: 56px; }
.gm { width: 15px; height: 12px; margin-right: 9px; }
.gml { width: 47px; }
.yt { width: 16px; height: 12px; margin-right: 8px; }
.ytl { width: 63px; letter-spacing: -.5px; }
.mp { width: 12px; height: 16px; margin-right: 10px; }
.reading { margin-left: auto; display: flex; align-items: center; border-left: 1px solid #77858c; height: 16px; padding-left: 11px; gap: 9px; }
.reading svg { width: 14px; height: 14px; }
.head { height: 45px; flex: none; background: #2a2a2a; border-bottom: 1px solid #000; display: flex; align-items: center; font-family: "Liberation Sans", sans-serif; color: #ddd; }
.burger { width: 20px; height: 18px; margin-left: 12px; }
.gtitle { margin-left: 15px; font-size: 16px; width: 579px; }
.logo { width: 116px; height: 44px; }
.acct { margin-left: auto; display: flex; align-items: center; font-family: Roboto, sans-serif; font-size: 14px; font-weight: 500; }
.login { border: 1px solid #aaa; border-radius: 4px; width: 52px; height: 25px; line-height: 25px; text-align: center; letter-spacing: -.3px; }
.or { margin: 0 7px 0 8px; width: 13px; }
.signup { background: #1cac57; color: #fff; border-radius: 3px; width: 66px; height: 29px; line-height: 28px; text-align: center; margin-bottom: 1px; letter-spacing: -.3px; }
.hicons { width: 104px; height: 22px; margin: 0 9px 0 18px; }
.body { height: 579px; flex: none; display: flex; }
.panel { width: 433px; box-sizing: border-box; border-right: 1px solid #ccc; flex: none; display: flex; flex-direction: column; font-family: "Liberation Sans", sans-serif; }
.ptool { height: 46px; background: linear-gradient(#fcfcfc, #eaeaea); flex: none; box-sizing: border-box; border-bottom: 1px solid #c6ccd0; }
.ptool svg { width: 433px; height: 46px; }
.expr { height: 88px; box-sizing: border-box; border: 1px solid #6399cc; flex: none; display: flex; }
.etab { width: 37px; background: #6399cc; color: #fff; font-size: 10px; padding: 1px 0 0 2px; box-sizing: border-box; }
.etab b { display: block; line-height: 12px; }
.etab svg { width: 30px; height: 30px; }
.ebody { position: relative; flex: 1; }
.formula { width: 340px; height: 40px; }
.del { position: absolute; right: 6px; top: 7px; width: 18px; height: 18px; }
.warn { margin: 11px 0 0 15px; font-size: 13px; line-height: 15px; color: #666; white-space: nowrap; letter-spacing: -.1px; }
.warn u { margin-left: 2px; }
.warn svg { display: inline-block; width: 12px; height: 11px; margin-right: 3px; vertical-align: -1px; }
.row2 { width: 38px; box-sizing: border-box; height: 52px; background: linear-gradient(#f5f5f5, #fff); border-right: 1px solid #eee; font-size: 11px; color: #888; padding: 1px 2px; }
.pfoot { margin-top: auto; height: 48px; display: flex; }
.kbd { width: 76px; height: 40px; border: 1px solid #ccc; border-radius: 5px; background: #ededed; margin: 1px 0 0 5px; box-shadow: 0 0 4px rgba(0,0,0,.15); }
.kbd svg { width: 50px; height: 20px; margin: 8px 0 0 14px; }
.pow { margin-left: 91px; width: 84px; font-size: 12px; color: #c4c4c4; text-align: center; }
.pow span { display: block; line-height: 13px; margin-top: 1px; letter-spacing: -.05px; }
.pow svg { width: 84px; height: 26px; margin-top: -1px; }
.graph { width: 933px; position: relative; overflow: hidden; }
.plot { width: 933px; height: 579px; }
.lab text { font-family: "Liberation Sans", sans-serif; font-size: 13px; text-anchor: middle; fill: #222; stroke: #fff; stroke-width: 3px; paint-order: stroke; }
.curve path { fill: none; stroke: #2d70b3; stroke-width: 3.600; stroke-linecap: round; stroke-linejoin: round; }
.curve path[fill] { fill: #2d70b3; }
.curve path.dots { stroke-dasharray: 5 4.500; stroke-width: 3.800; }
.tools { position: absolute; right: 5px; top: 5px; width: 36px; display: flex; flex-direction: column; gap: 7px; }
.tool, .zoomer { background: #ededed; border-radius: 4px; box-shadow: 0 0 4px rgba(0,0,0,.3); height: 36px; display: flex; align-items: center; justify-content: center; }
.tool svg { width: 18px; height: 18px; }
.zoomer { flex-direction: column; height: 75px; }
.zoomer div { height: 37px; width: 36px; display: flex; align-items: center; justify-content: center; box-sizing: border-box; }
.zoomer div + div { border-top: 1px solid #d3d3d3; }
.zoomer svg { width: 12px; height: 12px; }
.taskbar { height: 40px; flex: none; background: linear-gradient(#979799, #a2a2a4 4px, #a0a0a2); display: flex; align-items: center; color: #fff; box-sizing: border-box; border-top: 1px solid #8b8b8d; }
.win { width: 28px; height: 26px; margin-left: 11px; }
.tasks { display: flex; gap: 3px; margin-left: 12.500px; }
.task { width: 59px; height: 39px; box-sizing: border-box; display: flex; align-items: center; justify-content: center; }
.task svg { width: 32px; height: 32px; }
.open { border: 1px solid #777; background: #b5b5b7; box-shadow: inset 0 0 0 1px #cfcfd0; }
.chrome { background: #d2d2d4; box-shadow: inset 0 0 0 1px #fff; }
.discord { background: linear-gradient(#e4d08c, #e3bd74); box-shadow: inset 0 0 0 1px #f3e3b0; }
.zoom, .rar { position: relative; width: 54px; margin-right: 5px; }
.zoom::after, .rar::after { content: ""; position: absolute; right: -5px; top: -1px; width: 3px; height: 37px; border: 1px solid #777; border-left: 0; background: #c5c5c7; }
.rar { width: 51px; }
.rar::before { content: ""; position: absolute; right: -9px; top: -1px; width: 3px; height: 37px; border: 1px solid #777; border-left: 0; background: #c5c5c7; }
.tray { width: 112px; height: 20px; margin-left: auto; }
.eng { margin-left: 12px; font-size: 12px; width: 24px; letter-spacing: -.2px; }
.clock { text-align: center; line-height: 17px; width: 50px; margin: 0 18px 0 16px; letter-spacing: -.35px; white-space: nowrap; }
</style>
